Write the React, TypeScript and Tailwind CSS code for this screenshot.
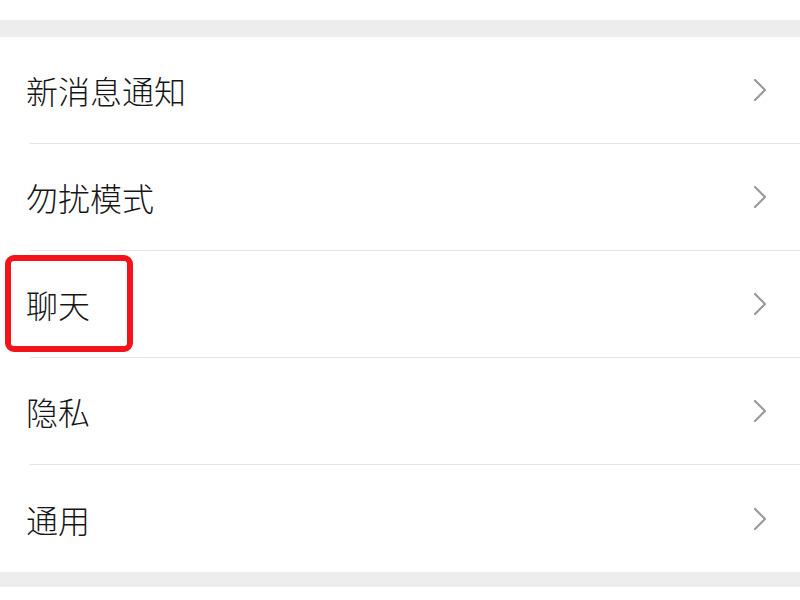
import React from "react";

const items = ["新消息通知", "勿扰模式", "聊天", "隐私", "通用"];

function Chevron() {
  return (
    <svg width="16" height="24" viewBox="0 0 16 24" fill="none" className="shrink-0">
      <polyline
        points="3,2 13,12 3,22"
        stroke="#9a9a9a"
        strokeWidth="2.2"
        strokeLinecap="round"
        strokeLinejoin="round"
      />
    </svg>
  );
}

export default function App() {
  return (
    <div
      className="w-[800px] h-[600px] bg-white flex flex-col overflow-hidden"
      style={{ fontFamily: '"Noto Sans CJK SC", "Noto Sans", sans-serif' }}
    >
      <div className="h-[20px] bg-white" />
      <div className="h-[17px] bg-[#ededed]" />
      <div className="flex flex-col bg-white">
        {items.map((label, i) => (
          <div key={label} className="relative h-[107px] flex flex-col">
            <div className="flex-1 flex items-center justify-between pl-[26px] pr-[32px]">
              <span className="text-[32px] leading-none font-light text-[#161616]">{label}</span>
              <Chevron />
            </div>
            {i < items.length - 1 && <div className="ml-[30px] h-px bg-[#e3e3e3]" />}
            {label === "聊天" && (
              <div className="absolute top-[4px] left-[5px] w-[128px] h-[97px] border-[6px] border-[#f2141a] rounded-[9px]" />
            )}
          </div>
        ))}
      </div>
      <div className="h-[15px] bg-[#ededed]" />
      <div className="flex-1 bg-white" />
    </div>
  );
}
